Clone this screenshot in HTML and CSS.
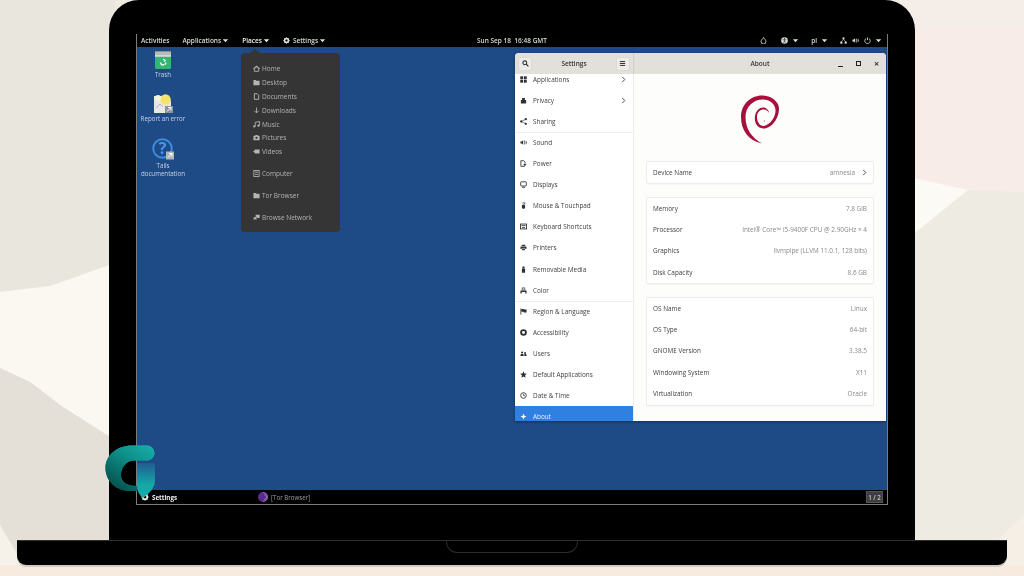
FILE: index.html
```html
<!DOCTYPE html>
<html lang="en">
<head>
<meta charset="utf-8">
<title>Tails desktop on a laptop</title>
<link rel="stylesheet" href="styles.css">
</head>
<body>
<svg class="backdrop" viewBox="0 0 1024 576" aria-hidden="true">
  <rect width="1024" height="576" fill="#eeebe3"/>
  <path d="M0 0H115V265L50 286 0 292Z" fill="#e9e6dd"/>
  <path d="M0 292L50 286 115 263V445L60 405 30 382 0 368Z" fill="#fbf8f2"/>
  <path d="M0 368L30 382 60 405 115 440V576H30L0 525Z" fill="#e4e0d8"/>
  <path d="M0 525L30 576H0Z" fill="#f6f1e9"/>
  <path d="M900 0H1024V192L968 190 900 175Z" fill="#f8ece8"/>
  <path d="M900 0H1024V30H900Z" fill="#f4ede8"/>
  <path d="M900 175L968 190 900 245Z" fill="#fbfaf5"/>
  <path d="M1024 515V576H960Z" fill="#f6efe6"/>
  <rect y="565" width="1024" height="11" fill="#f7ebe0"/>
</svg>
<svg class="defs" width="0" height="0" aria-hidden="true">
  <defs>
    <symbol id="i-caret" viewBox="0 0 8 8"><path d="M1 2.500h6L4 6z" fill="currentColor"/></symbol>
    <symbol id="i-chev" viewBox="0 0 8 8"><path d="M2.500 1l3 3-3 3" fill="none" stroke="currentColor" stroke-width="1.100"/></symbol>
    <symbol id="i-gear" viewBox="0 0 10 10"><circle cx="5" cy="5" r="2.900" fill="none" stroke="currentColor" stroke-width="2"/><path d="M5 .4v9.200M.4 5h9.200M1.800 1.800l6.400 6.400M8.200 1.800l-6.400 6.400" stroke="currentColor" stroke-width="1.200"/><circle cx="5" cy="5" r="1.500" fill="#000"/></symbol>
    <symbol id="i-home" viewBox="0 0 8 8"><path d="M0 4l4-3.300 4 3.300-.6.700L4 2 .6 4.700z" fill="currentColor"/><path d="M1.500 4.200L4 2.400l2.500 1.800V7.200H1.500z" fill="none" stroke="currentColor"/></symbol>
    <symbol id="i-folder" viewBox="0 0 8 8"><path d="M.5 1.200h2.600l.7.800h3.700v5H.5z" fill="currentColor"/></symbol>
    <symbol id="i-doc" viewBox="0 0 8 8"><path d="M1.500.8h3.200l1.800 1.800v4.600h-5z" fill="none" stroke="currentColor" stroke-width="1.100"/></symbol>
    <symbol id="i-down" viewBox="0 0 8 8"><path d="M4 .6v6M1.600 4.300L4 6.800l2.400-2.500" fill="none" stroke="currentColor" stroke-width="1"/></symbol>
    <symbol id="i-music" viewBox="0 0 8 8"><path d="M2.500 6V1.500l5-.9V5" fill="none" stroke="currentColor"/><circle cx="1.500" cy="6.200" r="1.300" fill="currentColor"/><circle cx="6.200" cy="5.400" r="1.300" fill="currentColor"/></symbol>
    <symbol id="i-photo" viewBox="0 0 8 8"><path d="M.5 2h1.800l.6-.9h2.200l.6.900h1.800v5H.5z" fill="currentColor"/><circle cx="4" cy="4.300" r="1.300" fill="#353535"/></symbol>
    <symbol id="i-video" viewBox="0 0 8 8"><path d="M2 1.800h5.500v4.400H2zM0 4l2-1.500v3z" fill="currentColor"/></symbol>
    <symbol id="i-computer" viewBox="0 0 8 8"><rect x="1" y=".6" width="6" height="6.800" fill="none" stroke="currentColor"/><path d="M2.200 2.500h3.600M2.200 5h3.600" stroke="currentColor"/></symbol>
    <symbol id="i-network" viewBox="0 0 8 8"><rect x="3" y=".8" width="4.600" height="3.800" fill="currentColor"/><rect x=".4" y="3.400" width="3.800" height="3.200" fill="currentColor" stroke="#353535" stroke-width=".5"/></symbol>
    <symbol id="i-search" viewBox="0 0 8 8"><circle cx="3.200" cy="3.200" r="2.200" fill="none" stroke="currentColor" stroke-width="1.200"/><path d="M4.800 4.800l2.500 2.500" stroke="currentColor" stroke-width="1.400"/></symbol>
    <symbol id="i-menu" viewBox="0 0 8 8"><path d="M1 1.800h6M1 4h6M1 6.200h6" stroke="currentColor" stroke-width="1.100"/></symbol>
    <symbol id="i-apps" viewBox="0 0 8 8"><path d="M.5.500h3v3h-3zM4.500.500h3v3h-3zM.5 4.500h3v3h-3zM4.500 4.500h3v3h-3z" fill="currentColor" stroke="currentColor" stroke-width=".4"/><path d="M4 0v8" stroke="#fff" stroke-width=".7"/></symbol>
    <symbol id="i-privacy" viewBox="0 0 8 8"><path d="M1 3.400h6v4H1z" fill="currentColor"/><path d="M2.400 3.500V1.200h3.200v2.300" fill="currentColor"/></symbol>
    <symbol id="i-share" viewBox="0 0 8 8"><circle cx="1.400" cy="4" r="1.300" fill="currentColor"/><circle cx="6.600" cy="1.400" r="1.300" fill="currentColor"/><circle cx="6.600" cy="6.600" r="1.300" fill="currentColor"/><path d="M1.400 4l5.200-2.600M1.400 4l5.200 2.600" stroke="currentColor" stroke-width=".7"/></symbol>
    <symbol id="i-sound" viewBox="0 0 8 8"><path d="M.5 2.800h1.500l1.600-1.500v5.400L2 5.200H.5zM5 1.800h.9v4.400H5zM6.700 2.600h.9v2.800h-.9z" fill="currentColor"/></symbol>
    <symbol id="i-power" viewBox="0 0 8 8"><path d="M5 7.200H1V.8h3.200l1.600 1.600v1" fill="none" stroke="currentColor"/><path d="M6 3.200L3.600 5.600h1.500L4.500 8 7.600 4.800H6z" fill="currentColor"/></symbol>
    <symbol id="i-display" viewBox="0 0 8 8"><rect x=".8" y=".9" width="6.400" height="4.800" rx=".6" fill="none" stroke="currentColor"/><path d="M2.200 7.200h3.600" stroke="currentColor"/></symbol>
    <symbol id="i-mouse" viewBox="0 0 8 8"><rect x="2.200" y="2.800" width="3.600" height="5" rx="1.500" fill="currentColor"/><path d="M5.400.4v2" stroke="currentColor"/><path d="M3 1h1.400" stroke="currentColor"/></symbol>
    <symbol id="i-keys" viewBox="0 0 8 8"><rect x=".5" y="1.200" width="7" height="5.600" fill="none" stroke="currentColor"/><path d="M1.700 3h4.600M2.200 5.300h3.600" stroke="currentColor"/></symbol>
    <symbol id="i-printer" viewBox="0 0 8 8"><path d="M2 .8h4v1.400H2zM.6 2.800h6.800v3H6V4.800H2v1H.6zM2.400 5.400h3.200v1.800H2.400z" fill="currentColor"/></symbol>
    <symbol id="i-usb" viewBox="0 0 8 8"><path d="M2.800.5h2.400v2H2.800zM2.200 2.800h3.600v5H2.200z" fill="currentColor"/></symbol>
    <symbol id="i-color" viewBox="0 0 8 8"><path d="M2.500 1h3v2.400h-3z" fill="none" stroke="currentColor" stroke-width=".8"/><path d="M.5 4h7v3.300H6V5.600H2v1.700H.5z" fill="currentColor"/></symbol>
    <symbol id="i-flag" viewBox="0 0 8 8"><path d="M1 .6v7" stroke="currentColor"/><path d="M1.500 1h3l.5.8h2.500v3.400H4.400l-.5-.8H1.500z" fill="currentColor"/></symbol>
    <symbol id="i-access" viewBox="0 0 8 8"><circle cx="4" cy="4" r="3.800" fill="currentColor"/><circle cx="4" cy="2" r=".8" fill="#000" fill-opacity=".75"/><path d="M1.700 3.200h4.600M4 3.200v1.500L2.900 6.600M4 4.700l1.100 1.900" stroke="#000" stroke-opacity=".75" stroke-width=".8" fill="none"/></symbol>
    <symbol id="i-access-dark" viewBox="0 0 8 8"><circle cx="4" cy="4" r="3.800" fill="currentColor"/><circle cx="4" cy="4" r="1.700" fill="#fff"/></symbol>
    <symbol id="i-users" viewBox="0 0 8 8"><circle cx="2.400" cy="2.800" r="1.200" fill="currentColor"/><circle cx="5.800" cy="3.400" r="1.100" fill="currentColor"/><path d="M.4 6.800c0-1.800 1-2.600 2-2.600s2 .8 2 2.600zM5 6.800c0-1 .2-1.700-.3-2.200.4-.3.800-.4 1.100-.4 1 0 1.800.8 1.800 2.600z" fill="currentColor"/></symbol>
    <symbol id="i-star" viewBox="0 0 8 8"><path d="M4 .3l1.100 2.500 2.700.3-2 1.800.6 2.700L4 6.200 1.600 7.600l.6-2.700-2-1.800 2.700-.3z" fill="currentColor"/></symbol>
    <symbol id="i-clock" viewBox="0 0 8 8"><circle cx="4" cy="4" r="3.200" fill="none" stroke="currentColor"/><path d="M4 2v2.200h1.800" fill="none" stroke="currentColor" stroke-width=".8"/></symbol>
    <symbol id="i-about" viewBox="0 0 8 8"><path d="M4 .6l1 2.400L7.400 4 5 5 4 7.400 3 5 .6 4 3 3z" fill="currentColor"/></symbol>
    <symbol id="i-drop" viewBox="0 0 8 8"><path d="M4 .6C5 2.400 6.800 3.500 6.800 5.200a2.800 2.800 0 0 1-5.600 0C1.200 3.500 3 2.400 4 .6z" fill="none" stroke="currentColor" stroke-width="1"/></symbol>
    <symbol id="i-tree" viewBox="0 0 8 8"><rect x="2.900" y=".4" width="2.200" height="2.200" fill="currentColor"/><rect x=".3" y="5.200" width="2.400" height="2.400" fill="currentColor"/><rect x="5.300" y="5.200" width="2.400" height="2.400" fill="currentColor"/><path d="M4 2.500L1.500 5.400M4 2.500l2.500 2.900" stroke="currentColor" stroke-width=".7"/></symbol>
    <symbol id="i-off" viewBox="0 0 8 8"><path d="M2.400 1.700a3.100 3.100 0 1 0 3.200 0M4 .5v3" fill="none" stroke="currentColor"/></symbol>
  </defs>
</svg>

<main class="stage">
  <section class="lid">
    <div class="screen">
      <header class="panel">
        <div class="panel-left">
          <span class="panel-item">Activities</span>
          <span class="panel-item">Applications<svg class="caret"><use href="#i-caret"/></svg></span>
          <span class="panel-item panel-open">Places<svg class="caret"><use href="#i-caret"/></svg></span>
          <span class="panel-item"><svg class="panel-gear"><use href="#i-gear"/></svg>Settings<svg class="caret"><use href="#i-caret"/></svg></span>
        </div>
        <div class="panel-clock">Sun Sep 18&nbsp; 16:48 GMT</div>
        <div class="panel-right">
          <svg class="tray tray-drop"><use href="#i-drop"/></svg>
          <span class="tray-group"><svg class="tray"><use href="#i-access"/></svg><svg class="caret"><use href="#i-caret"/></svg></span>
          <span class="tray-group">pl<svg class="caret"><use href="#i-caret"/></svg></span>
          <span class="tray-group tray-sys"><svg class="tray"><use href="#i-tree"/></svg><svg class="tray"><use href="#i-sound"/></svg><svg class="tray"><use href="#i-off"/></svg><svg class="caret"><use href="#i-caret"/></svg></span>
        </div>
      </header>

      <div class="desktop">
        <div class="launcher launcher-trash">
          <svg class="launcher-icon" viewBox="0 0 16 18">
            <path d="M0 1a1 1 0 0 1 1-1h14a1 1 0 0 1 1 1v4H0z" fill="#b9bbb9"/>
            <path d="M0 0h16v1H0z" fill="#8f9290"/>
            <path d="M0 5.600h16V17a1 1 0 0 1-1 1H1a1 1 0 0 1-1-1z" fill="#2fb773"/>
            <path d="M0 4.500h16v1.200H0z" fill="#f4f4f4"/>
            <path d="M8 8l2 1.400-.8 1.300M5.400 11.500l1.200 2.300h2.600M11 11.500l-1 2.300" fill="none" stroke="#ecf9f2" stroke-width="1.500"/>
          </svg>
          <span>Trash</span>
        </div>
        <div class="launcher launcher-report">
          <svg class="launcher-icon" viewBox="0 0 19 19">
            <path d="M0 2h11l6 5v12H0z" fill="#e9e7e1"/>
            <circle cx="11.500" cy="5.500" r="5.200" fill="#f4e36b"/>
            <circle cx="4" cy="4" r="3" fill="#f7f3d8"/>
            <path d="M2 14l4-4 3 3" fill="none" stroke="#b4b7bb"/>
            <rect x="11" y="12" width="8" height="7" fill="#8d939b"/>
            <path d="M13 17.500l4-4M14 13.500h3v3" stroke="#fff" fill="none"/>
          </svg>
          <span>Report an error</span>
        </div>
        <div class="launcher launcher-docs">
          <svg class="launcher-icon" viewBox="0 0 22 22">
            <circle cx="10.500" cy="10.500" r="9.300" fill="#1d4b8a" stroke="#3f8bd8" stroke-width="2"/>
            <text x="10.500" y="16" class="docs-mark">?</text>
            <rect x="14" y="13.500" width="8" height="8" fill="#b0b5ba"/>
            <path d="M16 19.500l4-4M17 15.500h3v3" stroke="#fff" fill="none"/>
          </svg>
          <span>Tails<br>documentation</span>
        </div>

        <nav class="places">
          <span class="places-arrow"></span>
          <a class="place"><svg><use href="#i-home"/></svg>Home</a>
          <a class="place"><svg><use href="#i-folder"/></svg>Desktop</a>
          <a class="place"><svg><use href="#i-doc"/></svg>Documents</a>
          <a class="place"><svg><use href="#i-down"/></svg>Downloads</a>
          <a class="place"><svg><use href="#i-music"/></svg>Music</a>
          <a class="place"><svg><use href="#i-photo"/></svg>Pictures</a>
          <a class="place"><svg><use href="#i-video"/></svg>Videos</a>
          <a class="place place-gap"><svg><use href="#i-computer"/></svg>Computer</a>
          <a class="place place-gap"><svg><use href="#i-folder"/></svg>Tor Browser</a>
          <a class="place place-gap"><svg><use href="#i-network"/></svg>Browse Network</a>
        </nav>

        <article class="window">
          <header class="titlebar">
            <div class="title-side">
              <button class="tool"><svg><use href="#i-search"/></svg></button>
              <strong>Settings</strong>
              <button class="tool"><svg><use href="#i-menu"/></svg></button>
            </div>
            <div class="title-main">
              <strong>About</strong>
              <span class="win-controls">
                <i class="ctl-min"></i><i class="ctl-max"></i><i class="ctl-close">×</i>
              </span>
            </div>
          </header>
          <div class="win-body">
            <aside class="sidebar">
              <ul class="side-list">
                <li class="side-row"><svg><use href="#i-apps"/></svg>Applications<svg class="chev"><use href="#i-chev"/></svg></li>
                <li class="side-row"><svg><use href="#i-privacy"/></svg>Privacy<svg class="chev"><use href="#i-chev"/></svg></li>
                <li class="side-row side-sep"><svg><use href="#i-share"/></svg>Sharing</li>
                <li class="side-row"><svg><use href="#i-sound"/></svg>Sound</li>
                <li class="side-row"><svg><use href="#i-power"/></svg>Power</li>
                <li class="side-row"><svg><use href="#i-display"/></svg>Displays</li>
                <li class="side-row"><svg><use href="#i-mouse"/></svg>Mouse &amp; Touchpad</li>
                <li class="side-row"><svg><use href="#i-keys"/></svg>Keyboard Shortcuts</li>
                <li class="side-row"><svg><use href="#i-printer"/></svg>Printers</li>
                <li class="side-row"><svg><use href="#i-usb"/></svg>Removable Media</li>
                <li class="side-row side-sep"><svg><use href="#i-color"/></svg>Color</li>
                <li class="side-row"><svg><use href="#i-flag"/></svg>Region &amp; Language</li>
                <li class="side-row"><svg><use href="#i-access-dark"/></svg>Accessibility</li>
                <li class="side-row"><svg><use href="#i-users"/></svg>Users</li>
                <li class="side-row"><svg><use href="#i-star"/></svg>Default Applications</li>
                <li class="side-row"><svg><use href="#i-clock"/></svg>Date &amp; Time</li>
                <li class="side-row side-active"><svg><use href="#i-about"/></svg>About</li>
              </ul>
            </aside>
            <section class="about">
              <svg class="debian" viewBox="741 95 38 49" aria-label="Debian">
                <path d="M762 143.500C748 140.500 741 130 741 117 741 104 751 95 763 95.500 772 96 779 102 779 108.500 779 119 771 129 763 128.500 757 128 754 122 755 116 756 110 760 107 764 107.500 767 108 769 111 769 113 768 111 766 109.500 764 109.500 760 109.500 757 112 757 117 757 122 760 126.500 764 126 770 125 776 117 775.500 110 775 104 770 99.500 763 99.500 753 99.500 745.500 107 745.500 117 745.500 129 752 138 762 143.500Z" fill="#a80f3c"/>
                <circle cx="764.500" cy="121" r=".6" fill="#a80f3c"/>
              </svg>
              <div class="card card-device">
                <div class="info-row"><span>Device Name</span><em>amnesia<svg class="chev"><use href="#i-chev"/></svg></em></div>
              </div>
              <div class="card">
                <div class="info-row"><span>Memory</span><em>7.8 GiB</em></div>
                <div class="info-row"><span>Processor</span><em>Intel® Core™ i5-9400F CPU @ 2.90GHz × 4</em></div>
                <div class="info-row"><span>Graphics</span><em>llvmpipe (LLVM 11.0.1, 128 bits)</em></div>
                <div class="info-row"><span>Disk Capacity</span><em>8.6 GB</em></div>
              </div>
              <div class="card">
                <div class="info-row"><span>OS Name</span><em>Linux</em></div>
                <div class="info-row"><span>OS Type</span><em>64-bit</em></div>
                <div class="info-row"><span>GNOME Version</span><em>3.38.5</em></div>
                <div class="info-row"><span>Windowing System</span><em>X11</em></div>
                <div class="info-row"><span>Virtualization</span><em>Oracle</em></div>
              </div>
            </section>
          </div>
        </article>
      </div>

      <footer class="taskbar">
        <span class="task task-active"><svg class="task-gear"><use href="#i-gear"/></svg>Settings</span>
        <span class="task task-idle">
          <svg class="task-onion" viewBox="0 0 10 10"><circle cx="5" cy="5" r="5" fill="#5b2a8c"/><path d="M5 .5a4.500 4.500 0 0 1 0 9M6 2.500a2.500 2.500 0 0 1 0 5" fill="none" stroke="#c9b4dd" stroke-width=".5"/></svg>[Tor Browser]
        </span>
        <span class="pager">1 / 2</span>
      </footer>
    </div>
  </section>

  <section class="base"><div class="notch"></div></section>
</main>

<svg class="brand" viewBox="105 445 52 56" aria-hidden="true">
  <defs>
    <linearGradient id="brand-bowl" x1="1" y1="0" x2=".25" y2="1">
      <stop offset="0" stop-color="#17b0ac"/>
      <stop offset=".45" stop-color="#0e8d87"/>
      <stop offset="1" stop-color="#06504c"/>
    </linearGradient>
    <linearGradient id="brand-edge" x1="0" y1="0" x2="1" y2="0">
      <stop offset="0" stop-color="#45b8ae" stop-opacity=".85"/>
      <stop offset=".22" stop-color="#45b8ae" stop-opacity="0"/>
    </linearGradient>
    <linearGradient id="brand-stem" x1="0" y1="0" x2="0" y2="1">
      <stop offset="0" stop-color="#1f5c91"/>
      <stop offset=".6" stop-color="#15a6a5"/>
      <stop offset="1" stop-color="#14b0ab"/>
    </linearGradient>
  </defs>
  <path id="brand-g" d="M147 445.500A7.500 7.500 0 0 1 147 460.500H134C126 460.500 121 468 121 475 121 482 127 486 137 486V491H130C115 491 105.500 480 105.500 468 105.500 455 117 445.500 132 445.500Z" fill="url(#brand-bowl)"/>
  <use href="#brand-g" class="brand-edge"/>
  <path d="M137 463H155V481C155 487 150 493 143 498 139 495 137 491 137 486Z" fill="url(#brand-stem)"/>
</svg>
</body>
</html>
```
FILE: styles.css
```css
* { box-sizing: border-box; }
html, body { margin: 0; height: 100%; }
body {
  width: 1024px;
  height: 576px;
  overflow: hidden;
  position: relative;
  font-family: "Open Sans", "Noto Sans", sans-serif;
}
.backdrop { position: absolute; inset: 0; width: 1024px; height: 576px; }
.defs { position: absolute; }
button { font: inherit; }
ul { list-style: none; margin: 0; padding: 0; }
svg { display: block; flex: none; }

.stage { position: relative; display: flex; flex-direction: column; align-items: center; width: 1024px; }

/* Laptop */
.lid {
  width: 806px;
  height: 540px;
  background: #000;
  border-radius: 30px 30px 0 0;
  padding: 34px 27px 35px;
}
.base {
  width: 990px;
  height: 25px;
  background: #000;
  border-top: 1px solid #2f2f2f;
  border-radius: 0 0 9px 9px;
  box-shadow: 0 2px 0 #cfcbc4;
  display: flex;
  justify-content: center;
}
.notch {
  width: 132px;
  height: 12px;
  border: 1px solid #2a2a2a;
  border-top: 0;
  border-radius: 0 0 11px 11px;
}
.screen {
  height: 471px;
  width: 752px;
  display: flex;
  flex-direction: column;
  border: solid #7d7d7d;
  border-width: 0 1px 1px;
  background: #000;
  filter: blur(.45px);
}

/* Top panel */
.panel {
  height: 13px;
  display: grid;
  grid-template-columns: 1fr auto 1fr;
  align-items: center;
  background: #000;
  color: #dcdcdc;
  font-size: 6.500px;
  font-weight: 600;
}
.panel-left { display: flex; align-items: center; padding-left: 4px; gap: 13px; height: 100%; }
.panel-item { display: inline-flex; align-items: center; height: 13px; white-space: nowrap; position: relative; }
.panel-open { color: #f2f2f2; }
.panel-open::after {
  content: "";
  position: absolute;
  left: -5px;
  right: -6px;
  bottom: -1px;
  height: 1.500px;
  background: #2f7fd8;
}
.caret { width: 7px; height: 7px; margin-left: 1px; }
.panel-gear { width: 7px; height: 7px; margin-right: 3px; }
.panel-clock { white-space: nowrap; }
.panel-right { display: flex; align-items: center; justify-content: flex-end; padding-right: 5px; gap: 12px; }
.tray { width: 7px; height: 7px; }
.tray-drop { margin-right: 2px; }
.tray-group { display: inline-flex; align-items: center; gap: 3px; }
.tray-sys { gap: 5px; }
.tray-sys .caret { margin-left: -1px; }

/* Desktop canvas */
.desktop {
  flex: 1;
  position: relative;
  background: #1e4a86;
  overflow: hidden;
}
.launcher {
  position: absolute;
  left: 0;
  width: 52px;
  display: flex;
  flex-direction: column;
  align-items: center;
  gap: 2px;
  color: #c9d3e2;
  font-size: 6.200px;
  line-height: 8px;
  text-align: center;
}
.launcher-trash { top: 4px; }
.launcher-trash .launcher-icon { width: 16px; height: 18px; }
.launcher-report { top: 47px; }
.launcher-report .launcher-icon { width: 19px; height: 19px; }
.launcher-docs { top: 91px; }
.launcher-docs .launcher-icon { width: 22px; height: 22px; }
.docs-mark { font-size: 16px; font-weight: 700; fill: #4b97e2; text-anchor: middle; font-family: "Open Sans", sans-serif; }

/* Places menu */
.places {
  position: absolute;
  left: 104px;
  top: 6px;
  width: 99px;
  height: 179px;
  padding: 8.500px 12px 0;
  background: #353535;
  border-radius: 4px;
  color: #b4b4b4;
  font-size: 6.500px;
}
.places-arrow {
  position: absolute;
  left: 9px;
  top: -4px;
  width: 0;
  height: 0;
  border: solid transparent;
  border-width: 0 5px 4px;
  border-bottom-color: #353535;
}
.place { display: flex; align-items: center; gap: 2px; height: 13.900px; white-space: nowrap; }
.place svg { width: 7px; height: 7px; }
.place-gap { margin-top: 8px; }

/* Settings window */
.window {
  position: absolute;
  left: 378px;
  top: 6px;
  width: 371px;
  height: 368px;
  display: flex;
  flex-direction: column;
  background: #fdfdfc;
  border-radius: 4px 4px 0 0;
  overflow: hidden;
  color: #3a3d40;
  box-shadow: 0 1px 3px rgba(0, 0, 0, .35);
}
.titlebar { display: flex; height: 21px; background: #e2e0da; font-size: 6.500px; color: #33363a; }
.titlebar strong { font-weight: 600; }
.title-side {
  width: 119px;
  display: flex;
  align-items: center;
  justify-content: space-between;
  padding: 0 3px;
  border-right: 1px solid #d0cec8;
}
.tool {
  width: 14px;
  height: 14px;
  display: grid;
  place-items: center;
  padding: 0;
  background: #eeece8;
  border: 1px solid #dcdad4;
  border-radius: 2px;
  color: #2e3134;
}
.tool svg { width: 7px; height: 7px; }
.title-main { flex: 1; display: flex; align-items: center; justify-content: center; position: relative; }
.win-controls { position: absolute; right: 7px; top: 0; bottom: 0; display: flex; align-items: center; gap: 13px; }
.win-controls i { width: 5px; height: 5px; display: block; font-style: normal; }
.ctl-min { border-bottom: 1px solid #1f2123; transform: translateY(1px); }
.ctl-max { border: 1.300px solid #1f2123; }
.ctl-close { font-size: 9px; line-height: 5px; text-align: center; font-weight: 700; }

.win-body { flex: 1; display: flex; min-height: 0; }
.sidebar { width: 119px; overflow: hidden; background: #fff; border-right: 1px solid #ecebe8; flex: none; }
.side-list { margin-top: -5.500px; }
.side-row {
  height: 21.120px;
  display: flex;
  align-items: center;
  gap: 6px;
  padding: 0 6px 0 5px;
  font-size: 6.400px;
  color: #3d4044;
  white-space: nowrap;
}
.side-row > svg:first-child { width: 7px; height: 7px; color: #2f3235; }
.side-row .chev { width: 7px; height: 7px; margin-left: auto; color: #44474a; }
.side-sep { box-shadow: 0 1px 0 #eeeeec; position: relative; }
.side-active { background: #2f80e0; color: #e7f1fc; }
.side-row.side-active > svg:first-child { color: #fff; }

.about {
  flex: 1;
  display: flex;
  flex-direction: column;
  align-items: center;
  padding: 21px 12px 0;
}
.debian { width: 38px; height: 49px; margin-bottom: 17px; }
.card {
  width: 100%;
  border: 1px solid #ececea;
  border-radius: 2px;
  background: #fff;
  margin-bottom: 13px;
  box-shadow: 0 1px 1px rgba(0, 0, 0, .03);
}
.card-device .info-row { height: 21px; padding: 0 5px 0 6px; }
.info-row {
  height: 21.300px;
  display: flex;
  align-items: center;
  justify-content: space-between;
  padding: 0 6px 1px 6px;
  font-size: 6.400px;
  color: #3d4044;
  white-space: nowrap;
}
.info-row em { font-style: normal; color: #85888b; display: flex; align-items: center; gap: 6px; }
.info-row .chev { width: 7px; height: 7px; color: #44474a; }

/* Taskbar */
.taskbar {
  height: 14px;
  display: flex;
  align-items: center;
  background: #000;
  font-size: 6.200px;
  position: relative;
}
.task { display: flex; align-items: center; white-space: nowrap; }
.task-active { width: 121px; padding-left: 4px; gap: 3px; color: #f2f2f2; font-weight: 700; }
.task-gear { width: 8px; height: 8px; }
.task-idle { gap: 3px; color: #9b9b9b; }
.task-onion { width: 10px; height: 10px; }
.pager {
  margin-left: auto;
  margin-right: 4px;
  width: 17px;
  height: 12px;
  display: grid;
  place-items: center;
  background: #3f3f3f;
  border: 1px solid #555;
  color: #c8c8c8;
  font-weight: 600;
}

/* Watermark logo over the laptop corner */
.brand { position: absolute; left: 105px; top: 445px; width: 52px; height: 56px; }
.brand-edge { fill: url(#brand-edge); }
```
